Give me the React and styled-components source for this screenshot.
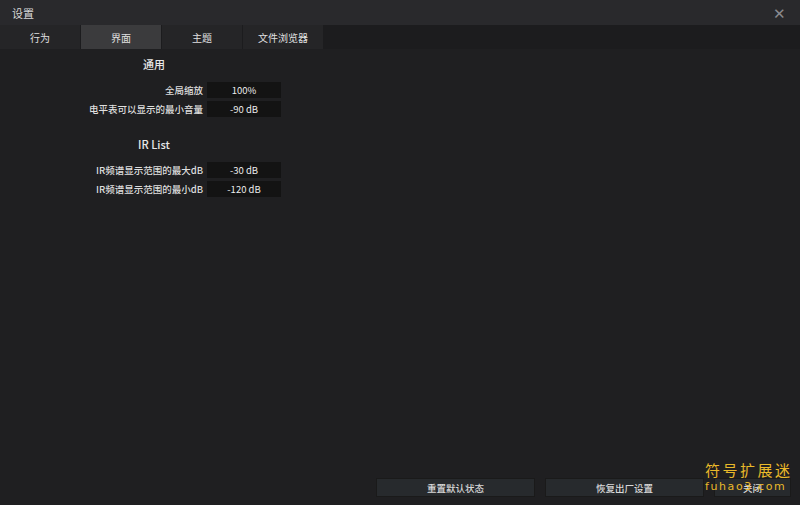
import React from "react";
import styled, { createGlobalStyle } from "styled-components";

const Global = createGlobalStyle`
  html, body { margin: 0; padding: 0; background: #1f1f21; }
  body { font-family: "Noto Sans CJK SC", "Noto Sans", sans-serif; }
  #root { width: 800px; height: 505px; }
`;

const Window = styled.div`
  position: relative;
  width: 800px;
  height: 505px;
  display: flex;
  flex-direction: column;
  background: #1f1f21;
  color: #e6e6e6;
  overflow: hidden;
`;

const TitleBar = styled.div`
  height: 25px;
  display: flex;
  align-items: center;
  justify-content: space-between;
  padding: 0 14px 0 12px;
  background: #29292c;
  font-size: 11px;
  color: #d8d8d8;
`;

const Close = styled.span`
  font-size: 15px;
  color: #8a8a8e;
  line-height: 1;
`;

const Tabs = styled.div`
  height: 24px;
  display: flex;
  background: #1c1c1e;
`;

const Tab = styled.div`
  width: 80px;
  margin-right: 1px;
  display: flex;
  align-items: center;
  justify-content: center;
  font-size: 10px;
  color: #e0e0e0;
  background: ${(p) => (p.$active ? "#3b3b3d" : "#252527")};
`;

const Body = styled.div`
  flex: 1;
  display: flex;
  flex-direction: column;
  padding-top: 5px;
`;

const Section = styled.div`
  width: 282px;
  display: flex;
  flex-direction: column;
  margin-bottom: 14px;
`;

const Heading = styled.div`
  width: 308px;
  text-align: center;
  font-size: 11px;
  color: #e8e8e8;
  font-weight: 500;
  height: 20px;
  line-height: 20px;
  margin-bottom: 8px;
`;

const Row = styled.div`
  display: flex;
  align-items: center;
  height: 16px;
  margin-bottom: 3px;
`;

const Label = styled.div`
  width: 203px;
  text-align: right;
  font-size: 9.5px;
  font-weight: 500;
  color: #dedede;
  flex-shrink: 0;
  margin-right: 4px;
`;

const Value = styled.div`
  width: 74px;
  height: 16px;
  background: #131313;
  font-size: 9.5px;
  color: #ececec;
  display: flex;
  align-items: center;
  justify-content: center;
`;

const Footer = styled.div`
  display: flex;
  justify-content: flex-end;
  gap: 10px;
  padding: 0 9px 8px 0;
`;

const Button = styled.div`
  box-sizing: border-box;
  width: ${(p) => p.$w}px;
  height: 19px;
  background: #272a2d;
  border: 1px solid #1a1a1a;
  font-size: 9.5px;
  font-weight: 500;
  color: #d8d8d8;
  display: flex;
  align-items: center;
  justify-content: center;
`;

const Watermark = styled.div`
  position: absolute;
  left: 705px;
  top: 462px;
  display: flex;
  flex-direction: column;
  align-items: flex-start;
  color: #e9b92a;
  pointer-events: none;
`;

const WmTitle = styled.span`
  font-size: 15px;
  letter-spacing: 2.5px;
  line-height: 16px;
`;

const WmUrl = styled.span`
  font-family: "DejaVu Sans", sans-serif;
  font-size: 11px;
  letter-spacing: 1.6px;
  line-height: 14px;
  margin-top: 2px;
`;

export default function App() {
  return (
    <>
      <Global />
      <Window>
        <TitleBar>
          <span>设置</span>
          <Close>✕</Close>
        </TitleBar>
        <Tabs>
          <Tab>行为</Tab>
          <Tab $active>界面</Tab>
          <Tab>主题</Tab>
          <Tab>文件浏览器</Tab>
        </Tabs>
        <Body>
          <Section>
            <Heading>通用</Heading>
            <Row>
              <Label>全局缩放</Label>
              <Value>100%</Value>
            </Row>
            <Row>
              <Label>电平表可以显示的最小音量</Label>
              <Value>-90 dB</Value>
            </Row>
          </Section>
          <Section>
            <Heading>IR List</Heading>
            <Row>
              <Label>IR频谱显示范围的最大dB</Label>
              <Value>-30 dB</Value>
            </Row>
            <Row>
              <Label>IR频谱显示范围的最小dB</Label>
              <Value>-120 dB</Value>
            </Row>
          </Section>
        </Body>
        <Footer>
          <Button $w={159}>重置默认状态</Button>
          <Button $w={159}>恢复出厂设置</Button>
          <Button $w={77}>关闭</Button>
        </Footer>
        <Watermark>
          <WmTitle>符号扩展迷</WmTitle>
          <WmUrl>fuhao3.com</WmUrl>
        </Watermark>
      </Window>
    </>
  );
}
